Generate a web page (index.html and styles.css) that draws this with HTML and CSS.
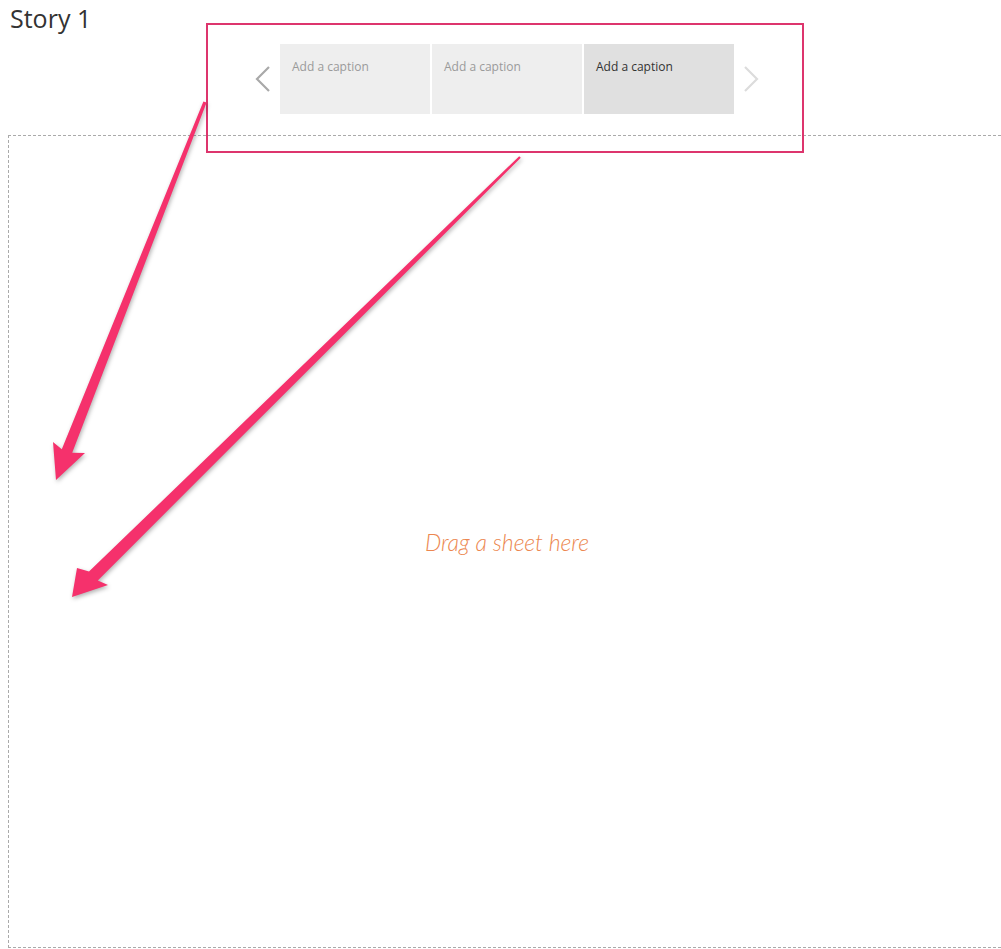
FILE: index.html
```html
<!DOCTYPE html>
<html lang="en">
<head>
  <meta charset="UTF-8">
  <title>Story 1</title>
  <link rel="stylesheet" href="styles.css">
</head>
<body>
  <div class="story">
    <h1 class="story-title">Story 1</h1>

    <div class="navigator">
      <svg class="chev chev-prev" width="20" height="26" viewBox="0 0 20 26">
        <polyline points="16,1 4,13 16,25" />
      </svg>
      <div class="points">
        <div class="point">Add a caption</div>
        <div class="point">Add a caption</div>
        <div class="point current">Add a caption</div>
      </div>
      <svg class="chev chev-next" width="20" height="26" viewBox="0 0 20 26">
        <polyline points="4,1 16,13 4,25" />
      </svg>
    </div>

    <div class="sheet-drop">
      <span class="drop-hint">Drag a sheet here</span>
    </div>
  </div>

  <!-- annotation overlay -->
  <div class="highlight-box"></div>
  <svg class="arrows" width="1001" height="949" viewBox="0 0 1001 949">
    <polygon points="203.4,101.4 206.6,102.6 72.2,452.8 85,453 56,480 53,442 61.8,449.2" />
    <polygon points="519.2,156.2 520.8,157.8 97.8,580.4 108,585 72,597 77,568 89,571.6" />
  </svg>
</body>
</html>
```

FILE: styles.css
```css
html, body { margin: 0; padding: 0; background: #fff; overflow: hidden; }
body { width: 1001px; height: 949px; position: relative; font-family: 'Open Sans', 'Liberation Sans', sans-serif; }

.story { width: 998px; margin-left: 8px; }
.story-title { margin: 0; padding-left: 2px; height: 36px; line-height: 36px; font-size: 25px; font-weight: 400; color: #333; }

.navigator { display: flex; align-items: center; justify-content: center; gap: 7px; margin-top: 8px; height: 70px; }
.chev polyline { fill: none; stroke-width: 2.2; stroke-linejoin: miter; }
.chev-prev polyline { stroke: #a9a9a9; }
.chev-next polyline { stroke: #dcdcdc; }

.points { display: flex; gap: 2px; }
.point { width: 150px; height: 70px; box-sizing: border-box; padding: 15px 12px; background: #eeeeee; color: #9a9a9a; font-size: 12px; line-height: 16px; }
.point.current { background: #e0e0e0; color: #333; }

.sheet-drop { margin-top: 21px; height: 813px; box-sizing: border-box; border: 1px dashed #aaa; display: flex; align-items: center; justify-content: center; }
.drop-hint { font-family: Lato, 'Open Sans', sans-serif; font-style: italic; font-weight: 300; font-size: 23px; color: #ec8750; }

.highlight-box { position: absolute; left: 206px; top: 23px; width: 598px; height: 130px; box-sizing: border-box; border: 2px solid #dd356d; }
.arrows { position: absolute; left: 0; top: 0; pointer-events: none; filter: drop-shadow(1px 2px 2px rgba(0,0,0,0.3)); }
.arrows polygon { fill: #f5316c; }
```
